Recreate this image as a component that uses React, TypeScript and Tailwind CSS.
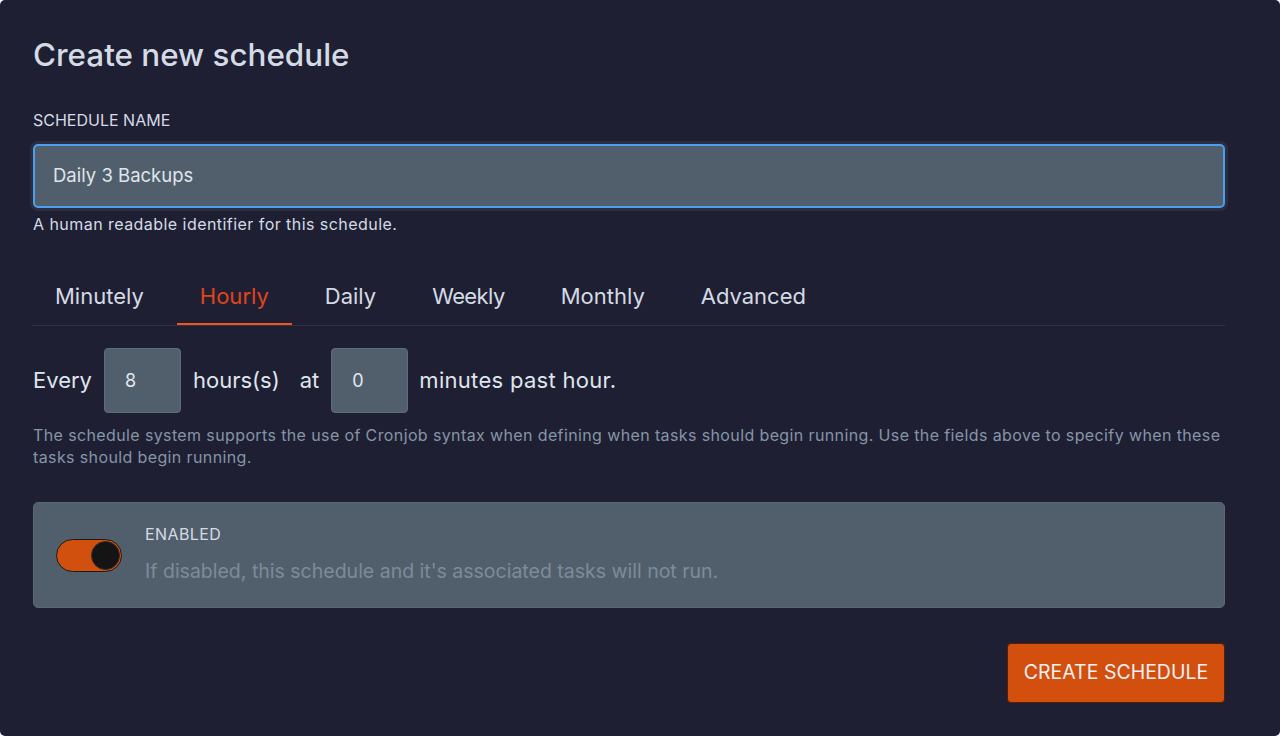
import React, { useState } from "react";

const tabs = ["Minutely", "Hourly", "Daily", "Weekly", "Monthly", "Advanced"];

function NumberBox({ value }: { value: string }) {
  return (
    <div className="w-[77px] h-[65px] rounded-[4px] bg-[#515f6c] border border-[#5f6d7a] flex items-center pl-[20px] text-[18px] text-[#e2e8f0]">
      {value}
    </div>
  );
}

export default function App() {
  const [active] = useState("Hourly");

  return (
    <div className="bg-white w-[1280px] h-[736px]">
      <div
        className="w-full h-full bg-[#1f1f33] rounded-[5px] px-[33px] pt-[36px] text-[#cbd5e0]"
        style={{ fontFamily: "Inter, 'Noto Sans', sans-serif" }}
      >
        <h1 className="text-[31.4px] leading-[38px] font-medium text-[#d4dbe4]">Create new schedule</h1>

        <label className="block mt-[36px] text-[16px] leading-[20px] uppercase text-[#d4dbe4]">
          Schedule name
        </label>
        <div className="mt-[14px] h-[64px] w-[1192px] rounded-[5px] bg-[#515f6c] border-2 border-[#4aa0ec] shadow-[0_0_0_3px_#2b2d40] flex items-center pl-[18px] text-[18.5px] text-[#dfe5ec]">
          Daily 3 Backups
        </div>
        <p className="mt-[6px] text-[16px] leading-[20px] tracking-[0.45px] text-[#d4dbe4]">A human readable identifier for this schedule.</p>

        <div className="mt-[38px] -ml-px w-[1193px] flex gap-[10px] border-b border-[#2e3240]">
          {tabs.map((t) => (
            <div
              key={t}
              className={
                t === active
                  ? "px-[23px] h-[53px] flex items-start pt-[10px] text-[22px] leading-[28px] text-[#e0441a] border-b-2 border-[#f0561b] -mb-px"
                  : "px-[23px] h-[53px] flex items-start pt-[10px] text-[22px] leading-[28px] text-[#d4dbe4]"
              }
            >
              {t === "Weekly" ? <span className="tracking-[-0.6px]">{t}</span> : t}
            </div>
          ))}
        </div>

        <div className="mt-[22px] -ml-px flex items-center text-[22px] text-[#dfe5ec]">
          <span className="ml-px mr-[12px]">Every</span>
          <NumberBox value="8" />
          <span className="ml-[12px]">hours(s)</span>
          <span className="ml-[20px] mr-[12px]">at</span>
          <NumberBox value="0" />
          <span className="ml-[11px] tracking-[0.3px]">minutes past hour.</span>
        </div>

        <p className="mt-[11px] text-[16px] leading-[22px] tracking-[0.38px] text-[#8595a6] w-[1215px]">
          The schedule system supports the use of Cronjob syntax when defining when tasks should begin running. Use the fields above to specify when these
          <br />
          tasks should begin running.
        </p>

        <div className="mt-[34px] w-[1192px] h-[106px] rounded-[5px] bg-[#515f6c] border border-[#5a6876] flex items-center pl-[22px]">
          <div className="w-[66px] h-[33px] rounded-full bg-[#d2500e] border border-[#1a1a1a] flex items-center justify-end pr-[1px]">
            <div className="w-[29px] h-[29px] rounded-full bg-[#141414] border border-[#3a2a22]" />
          </div>
          <div className="ml-[23px] flex flex-col">
            <span className="text-[16px] leading-[20px] uppercase tracking-[0.4px] text-[#d4dbe4] mt-[-4px]">Enabled</span>
            <span className="mt-[15px] text-[19.5px] leading-[24px] text-[#7d8b99]">
              If disabled, this schedule and it's associated tasks will not run.
            </span>
          </div>
        </div>

        <div className="mt-[35px] w-[1192px] flex justify-end">
          <button className="w-[218px] h-[60px] rounded-[4px] bg-[#d24f0e] border border-[#5a1e05] text-[19.5px] uppercase text-[#f1f1f4]">
            Create Schedule
          </button>
        </div>
      </div>
    </div>
  );
}
